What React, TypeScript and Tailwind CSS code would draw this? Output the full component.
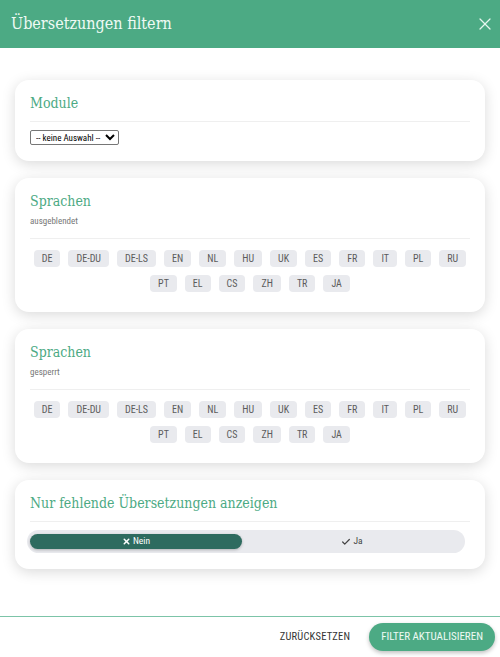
import { X, Check } from "lucide-react";

const langs = ["DE", "DE-DU", "DE-LS", "EN", "NL", "HU", "UK", "ES", "FR", "IT", "PL", "RU", "PT", "EL", "CS", "ZH", "TR", "JA"];

const slab = { fontFamily: '"Roboto Slab", "DejaVu Serif Condensed", "DejaVu Serif", serif' };

function Card({ title, sub, pb, children }: { title: string; sub?: string; pb: string; children: React.ReactNode }) {
  return (
    <div className={`flex flex-col rounded-[14px] bg-white px-[15px] pt-[12px] shadow-[0_3px_14px_rgba(0,0,0,0.15)] ${pb}`}>
      <h2 className="text-[14px] leading-[22px] text-[#4caa84]" style={slab}>
        {title}
      </h2>
      {sub && <div className="text-[9px] leading-[14px] text-[#777] mt-[2px] mb-[3px]">{sub}</div>}
      <div className="border-t border-[#efefef] mt-[7px]" />
      {children}
    </div>
  );
}

function Chips() {
  return (
    <div className="flex flex-wrap justify-center gap-[8px] mt-[11px]">
      {langs.map((l) => (
        <span key={l} className="bg-[#e9eaee] text-[#5c5c5c] rounded-[4px] px-[8px] h-[17px] flex items-center text-[10px]">
          {l}
        </span>
      ))}
    </div>
  );
}

export default function App() {
  return (
    <div className="w-[500px] h-[657px] flex flex-col bg-white" style={{ fontFamily: '"Roboto Condensed", "Liberation Sans Narrow", Roboto, sans-serif' }}>
      <header className="h-[48px] bg-[#4caa84] flex items-center justify-between pl-[11px] pr-[5px]">
        <h1 className="text-[16px] text-[#effaf4]" style={slab}>
          Übersetzungen filtern
        </h1>
        <X className="w-[20px] h-[20px] text-[#e6f6ee]" strokeWidth={1.5} />
      </header>
      <main className="flex-1 flex flex-col gap-[17px] px-[15px] pt-[32px]">
        <Card title="Module" pb="pb-[16px]">
          <select className="block mt-[8px] border border-[#767676] rounded-[2px] text-[9px] h-[15px] px-[1px] text-black bg-white w-[89px]">
            <option>-- keine Auswahl --</option>
          </select>
        </Card>
        <Card title="Sprachen" sub="ausgeblendet" pb="pb-[20px]">
          <Chips />
        </Card>
        <Card title="Sprachen" sub="gesperrt" pb="pb-[20px]">
          <Chips />
        </Card>
        <Card title="Nur fehlende Übersetzungen anzeigen" pb="pb-[16px]">
          <div className="mt-[8px] -ml-[3px] w-[438px] rounded-full bg-[#e9eaee] h-[23px] py-[4px] px-[3px] flex">
            <div className="w-[212px] rounded-full bg-[#2e6b5f] text-white text-[9.5px] flex items-center justify-center gap-[2px] shadow-[0_1px_3px_rgba(0,0,0,0.25)]">
              <X className="w-[9px] h-[9px]" strokeWidth={4} />
              Nein
            </div>
            <div className="flex-1 text-[#444] text-[9.5px] flex items-center justify-center gap-[2px]">
              <Check className="w-[10px] h-[10px]" strokeWidth={3} />
              Ja
            </div>
          </div>
        </Card>
      </main>
      <footer className="border-t border-[#7cc4a8] h-[41px] flex items-center justify-end gap-[19px] pr-[5px]">
        <span className="text-[10.5px] text-[#333] tracking-[0.2px]">ZURÜCKSETZEN</span>
        <button className="h-[28px] px-[12px] rounded-full bg-[#4caa84] text-[#effaf4] text-[11px] shadow-[0_2px_4px_rgba(0,0,0,0.25)]">
          FILTER AKTUALISIEREN
        </button>
      </footer>
    </div>
  );
}
